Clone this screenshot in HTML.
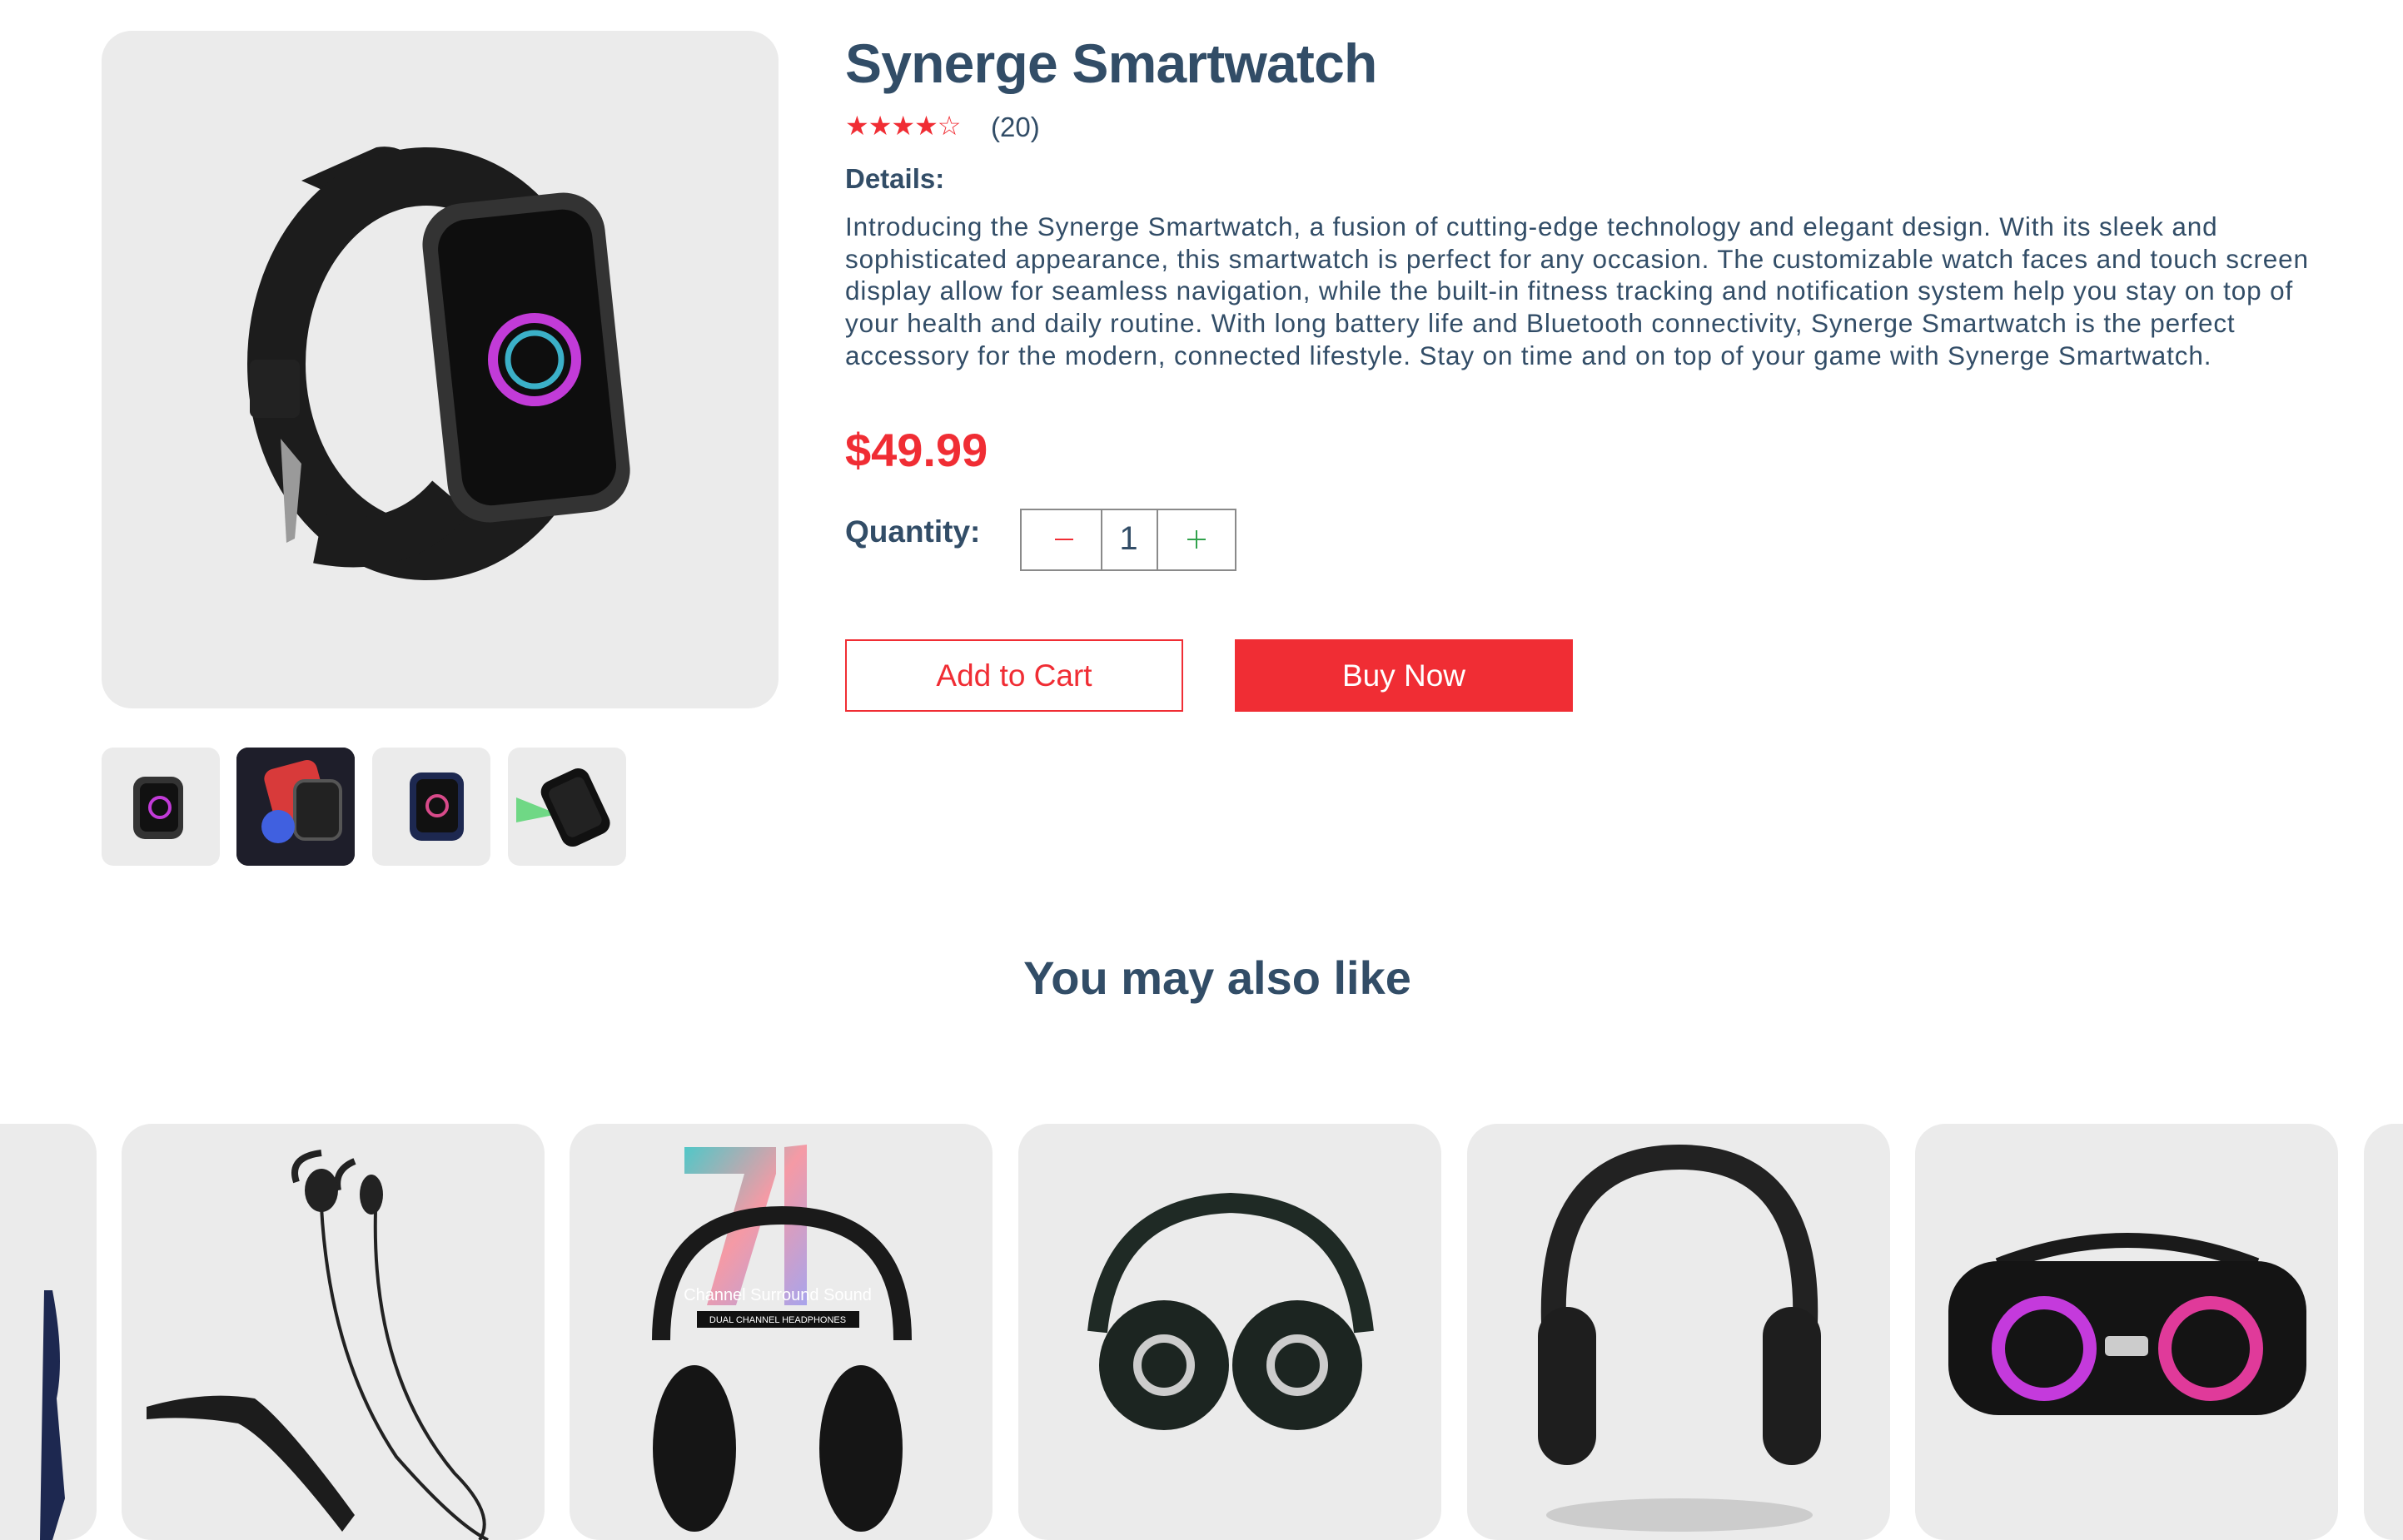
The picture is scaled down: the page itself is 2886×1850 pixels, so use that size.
<!DOCTYPE html>
<html><head><meta charset="utf-8"><style>
*{margin:0;padding:0;box-sizing:border-box}
body{width:2886px;height:1778px;overflow:hidden;background:#fff;font-family:"Liberation Sans",sans-serif;color:#324d67;position:relative}
.abs{position:absolute}
.main{left:122px;top:37px;width:813px;height:814px;background:#ebebeb;border-radius:36px}
.th{top:898px;width:142px;height:142px;background:#ebebeb;border-radius:14px;overflow:hidden}
.stars{left:1015px;top:132px;font-size:32px;color:#f02d34;letter-spacing:-1px}
.cnt{left:1190px;top:134px;font-size:33px}
.det{left:1015px;top:196px;font-size:33px;font-weight:bold}
.p{left:1015px;top:253px;font-size:31.5px;line-height:38.7px;white-space:nowrap;letter-spacing:0.85px}
.price{left:1015px;top:508px;font-size:56px;font-weight:bold;color:#f02d34}
.ql{left:1015px;top:618px;font-size:37px;font-weight:bold}
.qb{left:1225px;top:611px;width:260px;height:75px;border:2px solid #8a8a8a}
.btn{top:768px;width:406px;height:87px;font-size:37px;display:flex;align-items:center;justify-content:center}
.ym{left:0;width:2924px;top:1142px;text-align:center;font-size:56px;font-weight:bold}
.card{top:1350px;height:500px;width:508px;background:#ebebeb;border-radius:36px;overflow:hidden}
</style></head><body>
<div class="abs main">
<svg width="813" height="814" viewBox="0 0 813 814">
<path d="M240 180 L330 140 Q360 135 380 160 L390 200 L330 220 Z" fill="#1c1c1c"/>
<ellipse cx="390" cy="400" rx="180" ry="225" fill="none" stroke="#1c1c1c" stroke-width="70"/>
<path d="M420 560 Q360 630 260 610" stroke="#1c1c1c" stroke-width="60" fill="none"/>
<rect x="400" y="200" width="220" height="385" rx="50" transform="rotate(-6 510 392)" fill="#333"/>
<rect x="418" y="220" width="186" height="345" rx="36" transform="rotate(-6 510 392)" fill="#0e0e0e"/>
<circle cx="520" cy="395" r="50" fill="none" stroke="#c23bd8" stroke-width="12"/>
<circle cx="520" cy="395" r="32" fill="none" stroke="#3bb0c8" stroke-width="7"/>
<rect x="178" y="395" width="60" height="70" rx="8" fill="#222"/>
<path d="M215 490 L240 520 L232 610 L222 615Z" fill="#9a9a9a"/>
</svg></div>
<div class="abs th" style="left:122px"><svg width="142" height="142"><rect x="38" y="35" width="60" height="75" rx="14" fill="#333"/><rect x="46" y="43" width="46" height="58" rx="8" fill="#111"/><circle cx="70" cy="72" r="12" fill="none" stroke="#c23bd8" stroke-width="4"/></svg></div>
<div class="abs th" style="left:284px;background:#222"><svg width="142" height="142"><rect x="0" y="0" width="142" height="142" fill="#1e1e2a"/><rect x="40" y="20" width="65" height="80" rx="12" fill="#d83a3a" transform="rotate(-15 70 60)"/><rect x="70" y="40" width="55" height="70" rx="12" fill="#222" stroke="#555" stroke-width="4"/><circle cx="50" cy="95" r="20" fill="#4060e0"/></svg></div>
<div class="abs th" style="left:447px"><svg width="142" height="142"><rect x="45" y="30" width="65" height="82" rx="14" fill="#1d2850"/><rect x="53" y="38" width="50" height="64" rx="8" fill="#111"/><circle cx="78" cy="70" r="12" fill="none" stroke="#d84a8a" stroke-width="4"/></svg></div>
<div class="abs th" style="left:610px"><svg width="142" height="142"><path d="M10 60 L60 80 L10 90Z" fill="#3ad05a" opacity=".7"/><rect x="50" y="30" width="62" height="85" rx="14" fill="#111" transform="rotate(-25 80 72)"/><rect x="58" y="40" width="46" height="64" rx="8" fill="#222" transform="rotate(-25 80 72)"/></svg></div>

<div class="abs" style="left:1015px;top:38px;font-size:66px;font-weight:bold;letter-spacing:-0.8px">Synerge Smartwatch</div>
<div class="abs stars">★★★★☆</div>
<div class="abs cnt">(20)</div>
<div class="abs det">Details:</div>
<div class="abs p">Introducing the Synerge Smartwatch, a fusion of cutting-edge technology and elegant design. With its sleek and<br>sophisticated appearance, this smartwatch is perfect for any occasion. The customizable watch faces and touch screen<br>display allow for seamless navigation, while the built-in fitness tracking and notification system help you stay on top of<br>your health and daily routine. With long battery life and Bluetooth connectivity, Synerge Smartwatch is the perfect<br>accessory for the modern, connected lifestyle. Stay on time and on top of your game with Synerge Smartwatch.</div>
<div class="abs price">$49.99</div>
<div class="abs ql">Quantity:</div>
<div class="abs qb">
<div class="abs" style="left:95px;top:0;width:2px;height:71px;background:#8a8a8a"></div>
<div class="abs" style="left:162px;top:0;width:2px;height:71px;background:#8a8a8a"></div>
<div class="abs" style="left:40px;top:34px;width:22px;height:2px;background:#f02d34"></div>
<div class="abs" style="left:95px;width:67px;top:12px;text-align:center;font-size:40px;color:#324d67">1</div>
<div class="abs" style="left:199px;top:34px;width:22px;height:2px;background:#31a24c"></div>
<div class="abs" style="left:209px;top:24px;width:2px;height:22px;background:#31a24c"></div>
</div>
<div class="abs btn" style="left:1015px;border:2px solid #f02d34;color:#f02d34;background:#fff">Add to Cart</div>
<div class="abs btn" style="left:1483px;background:#f02d34;color:#fff">Buy Now</div>
<div class="abs ym">You may also like</div>

<div class="abs card" style="left:-392px"><svg width="508" height="500"><path d="M455 200 Q470 280 460 330 L470 450 L455 500 L440 500 L445 200Z" fill="#1d2850"/></svg></div>
<div class="abs card" style="left:146px"><svg width="508" height="500">
<path d="M210 70 Q200 40 240 35 M280 45 Q255 55 260 80" stroke="#222" stroke-width="8" fill="none"/>
<ellipse cx="240" cy="80" rx="20" ry="26" fill="#222"/><ellipse cx="300" cy="85" rx="14" ry="24" fill="#222"/>
<path d="M240 100 Q250 280 330 400 Q400 480 440 500 M305 105 Q300 300 400 420 Q450 470 430 500" stroke="#222" stroke-width="4" fill="none"/>
<path d="M30 340 Q100 320 160 330 Q200 360 280 470 L265 490 Q180 380 140 360 Q80 350 30 355Z" fill="#1c1c1c"/>
</svg></div>
<div class="abs card" style="left:684px"><svg width="508" height="500">
<defs><linearGradient id="g" x1="0" y1="0" x2="1" y2="1"><stop offset="0" stop-color="#4ec8c8"/><stop offset=".5" stop-color="#f59aa5"/><stop offset="1" stop-color="#a8a4ec"/></linearGradient></defs>
<path d="M138 28 L248 28 L248 60 L200 218 L165 218 L210 60 L138 60Z M258 28 L285 25 L285 218 L258 218Z" fill="url(#g)"/>
<path d="M110 260 Q110 110 255 110 Q400 110 400 260" stroke="#1a1a1a" stroke-width="22" fill="none"/>
<rect x="153" y="225" width="195" height="20" fill="#111"/>
<text x="250" y="239" text-anchor="middle" font-size="11" fill="#fff" font-family="Liberation Sans">DUAL CHANNEL HEADPHONES</text>
<text x="250" y="212" text-anchor="middle" font-size="20" fill="#fff" font-family="Liberation Sans">Channel Surround Sound</text>
<ellipse cx="150" cy="390" rx="50" ry="100" fill="#151515"/><ellipse cx="350" cy="390" rx="50" ry="100" fill="#151515"/>
</svg></div>
<div class="abs card" style="left:1223px"><svg width="508" height="500">
<path d="M95 250 Q110 100 255 95 Q400 100 415 250" stroke="#1f2a25" stroke-width="24" fill="none"/>
<circle cx="175" cy="290" r="78" fill="#1c2521"/><circle cx="335" cy="290" r="78" fill="#1c2521"/>
<circle cx="175" cy="290" r="32" fill="none" stroke="#ccc" stroke-width="10"/><circle cx="335" cy="290" r="32" fill="none" stroke="#ccc" stroke-width="10"/>
</svg></div>
<div class="abs card" style="left:1762px"><svg width="508" height="500">
<path d="M105 260 Q90 40 255 40 Q420 40 405 260" stroke="#222" stroke-width="30" fill="none"/>
<rect x="85" y="220" width="70" height="190" rx="35" fill="#1e1e1e"/><rect x="355" y="220" width="70" height="190" rx="35" fill="#1e1e1e"/>
<ellipse cx="255" cy="470" rx="160" ry="20" fill="#ccc"/>
</svg></div>
<div class="abs card" style="left:2300px"><svg width="508" height="500">
<path d="M100 170 Q255 110 410 170" stroke="#1a1a1a" stroke-width="18" fill="none"/>
<rect x="40" y="165" width="430" height="185" rx="60" fill="#141414"/>
<circle cx="155" cy="270" r="55" fill="none" stroke="#c43adc" stroke-width="16"/><circle cx="355" cy="270" r="55" fill="none" stroke="#e03a9a" stroke-width="16"/>
<rect x="228" y="255" width="52" height="24" rx="5" fill="#ccc"/>
</svg></div>
<div class="abs card" style="left:2839px"></div>
</body></html>
